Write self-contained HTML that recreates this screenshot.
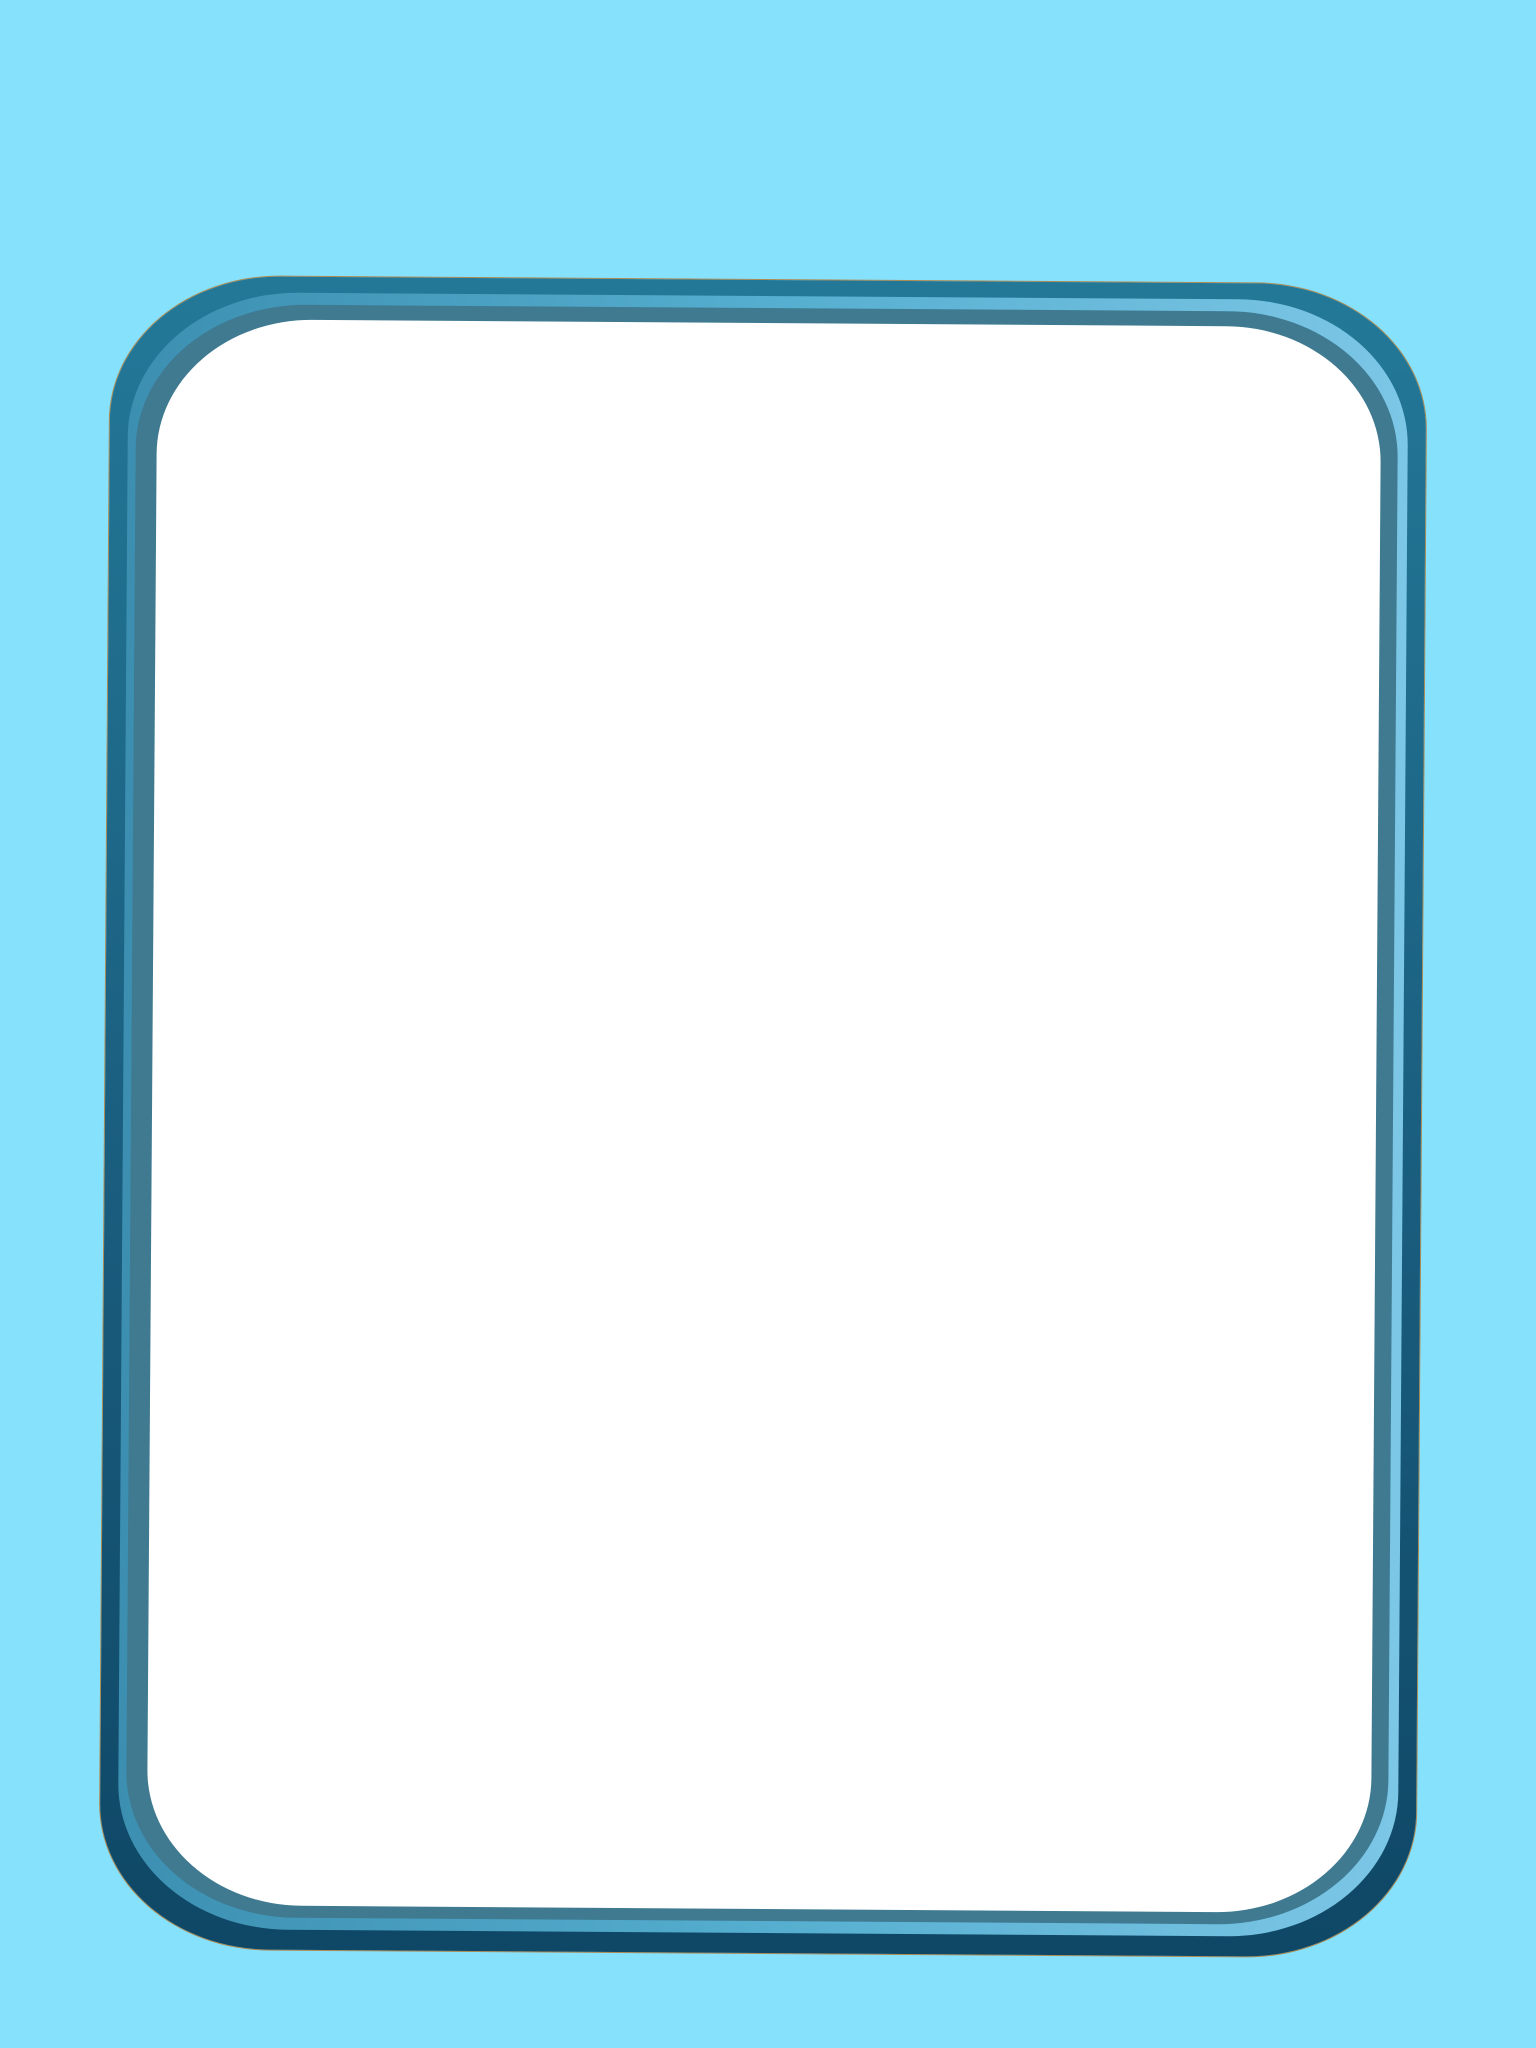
<!DOCTYPE html>
<html><head><meta charset="utf-8"><style>
html,body{margin:0;padding:0;}
body{width:1536px;height:2048px;background:#86e1fd;position:relative;overflow:hidden;}
.wrap{position:absolute;left:105px;top:280px;width:1316px;height:1673px;transform:rotate(0.4deg);transform-origin:center;}
.l{position:absolute;border-radius:170px/145px;}
.a{inset:0;background:linear-gradient(180deg,#237898 0%,#1b5f80 50%,#0f4766 100%);box-shadow:0 0 0 1px #b08a50;}
.b{left:18px;top:16px;right:18px;bottom:20px;background:linear-gradient(90deg,#3c8fb0 0%,#55aecf 50%,#7cc6e6 100%);}
.c{left:26px;top:28px;right:28px;bottom:32px;background:#3f7a91;}
.d{left:47px;top:43px;right:45px;bottom:44px;background:#fff;border-radius:155px/135px;}
</style></head><body>
<div class="wrap">
<div class="l a"></div>
<div class="l b"></div>
<div class="l c"></div>
<div class="l d"></div>
</div>
</body></html>
